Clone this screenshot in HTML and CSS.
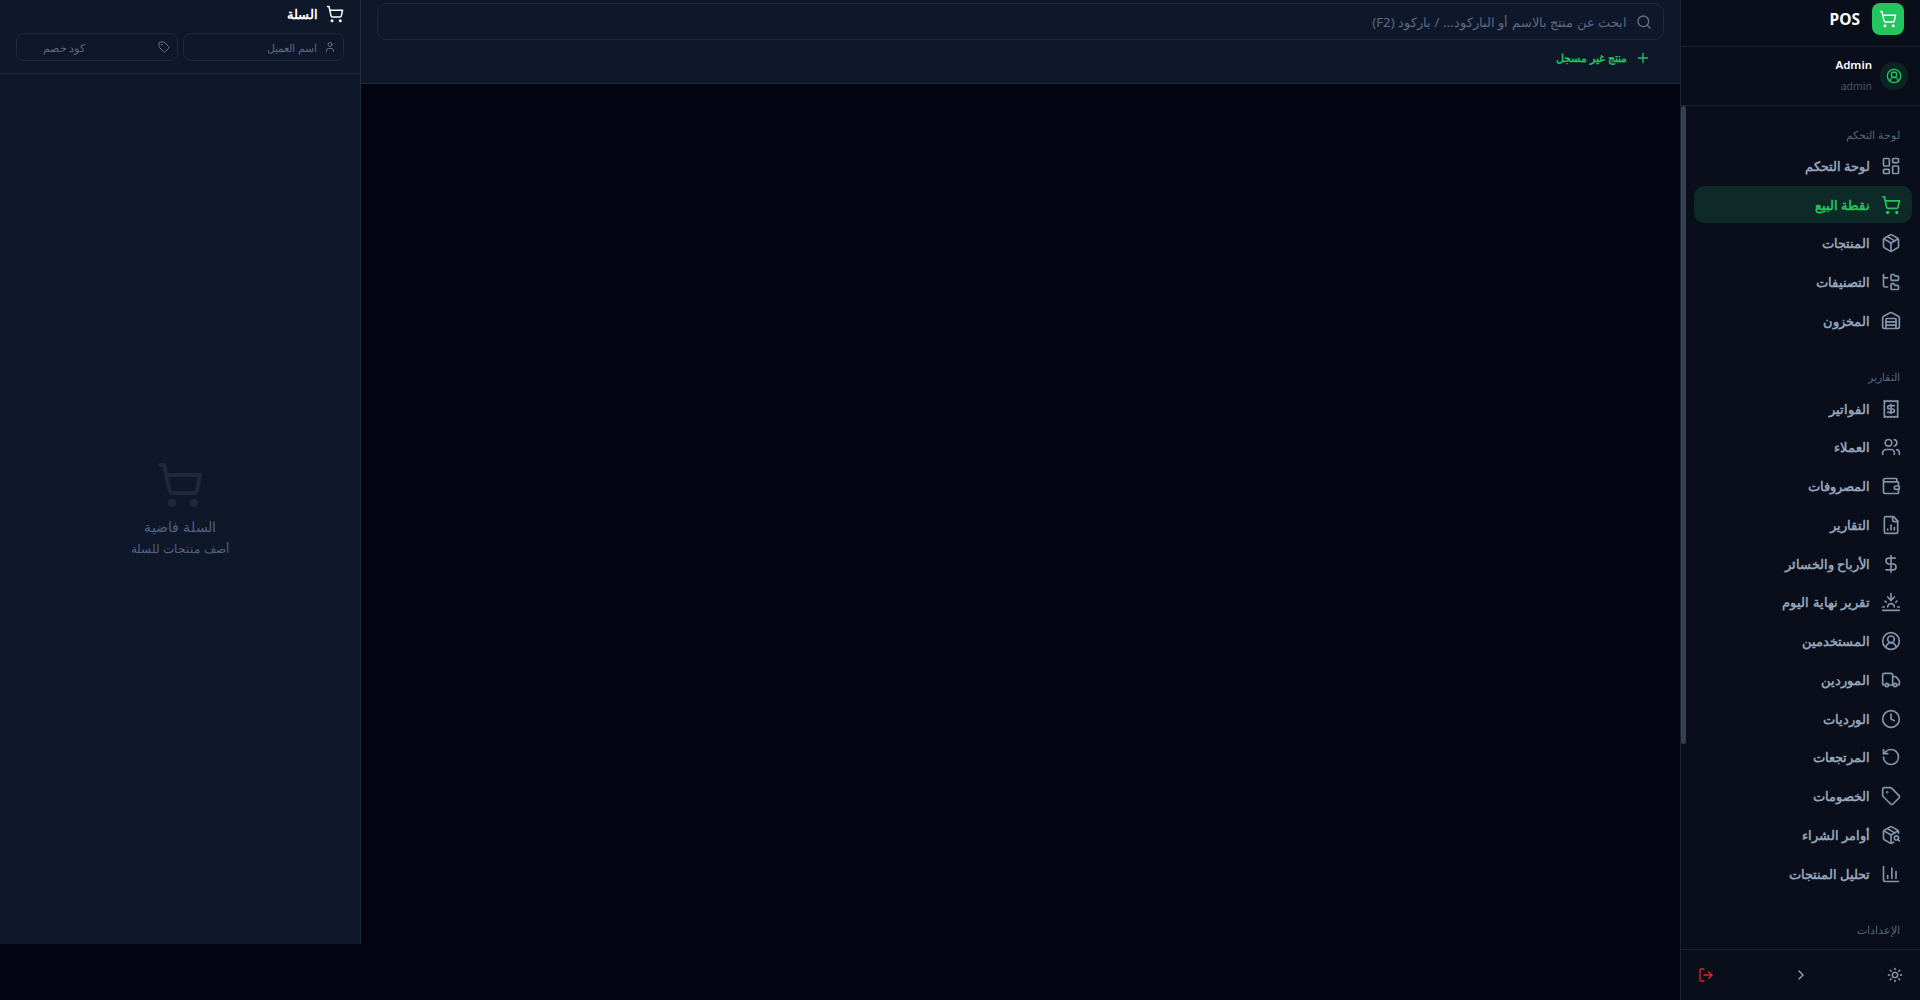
FILE: index.html
```html
<!DOCTYPE html>
<html lang="ar" dir="rtl">
<head>
<meta charset="utf-8">
<title>POS</title>
<link rel="stylesheet" href="styles.css">
</head>
<body>
<svg class="sprite" aria-hidden="true">
  <symbol id="i-cart" viewBox="0 0 24 24"><circle cx="8" cy="21" r="1"/><circle cx="19" cy="21" r="1"/><path d="M2.05 2.05h2l2.66 12.42a2 2 0 0 0 2 1.58h9.78a2 2 0 0 0 1.95-1.57l1.65-7.43H5.12"/></symbol>
  <symbol id="i-dash" viewBox="0 0 24 24"><rect x="3" y="3" width="7" height="9" rx="1"/><rect x="14" y="3" width="7" height="5" rx="1"/><rect x="14" y="12" width="7" height="9" rx="1"/><rect x="3" y="16" width="7" height="5" rx="1"/></symbol>
  <symbol id="i-package" viewBox="0 0 24 24"><path d="m7.5 4.27 9 5.15"/><path d="M21 8a2 2 0 0 0-1-1.73l-7-4a2 2 0 0 0-2 0l-7 4A2 2 0 0 0 3 8v8a2 2 0 0 0 1 1.73l7 4a2 2 0 0 0 2 0l7-4A2 2 0 0 0 21 16Z"/><path d="m3.3 7 8.7 5 8.7-5"/><path d="M12 22V12"/></symbol>
  <symbol id="i-tree" viewBox="0 0 24 24"><path d="M20 10a1 1 0 0 0 1-1V6a1 1 0 0 0-1-1h-2.5a1 1 0 0 1-.8-.4l-.9-1.2A1 1 0 0 0 15 3h-2a1 1 0 0 0-1 1v5a1 1 0 0 0 1 1Z"/><path d="M20 21a1 1 0 0 0 1-1v-3a1 1 0 0 0-1-1h-2.9a1 1 0 0 1-.88-.55l-.42-.85a1 1 0 0 0-.92-.6H13a1 1 0 0 0-1 1v5a1 1 0 0 0 1 1Z"/><path d="M3 5a2 2 0 0 0 2 2h3"/><path d="M3 3v13a2 2 0 0 0 2 2h3"/></symbol>
  <symbol id="i-warehouse" viewBox="0 0 24 24"><path d="M18 21V10a1 1 0 0 0-1-1H7a1 1 0 0 0-1 1v11"/><path d="M22 19a2 2 0 0 1-2 2H4a2 2 0 0 1-2-2V8a2 2 0 0 1 1.132-1.803l7.95-3.974a2 2 0 0 1 1.837 0l7.949 3.974A2 2 0 0 1 22 8z"/><path d="M6 13h12"/><path d="M6 17h12"/></symbol>
  <symbol id="i-receipt" viewBox="0 0 24 24"><path d="M4 2v20l2-1 2 1 2-1 2 1 2-1 2 1 2-1 2 1V2l-2 1-2-1-2 1-2-1-2 1-2-1-2 1Z"/><path d="M16 8h-6a2 2 0 1 0 0 4h4a2 2 0 1 1 0 4H8"/><path d="M12 17.5v-11"/></symbol>
  <symbol id="i-users" viewBox="0 0 24 24"><path d="M16 21v-2a4 4 0 0 0-4-4H6a4 4 0 0 0-4 4v2"/><circle cx="9" cy="7" r="4"/><path d="M22 21v-2a4 4 0 0 0-3-3.87"/><path d="M16 3.13a4 4 0 0 1 0 7.75"/></symbol>
  <symbol id="i-wallet" viewBox="0 0 24 24"><path d="M19 7V4a1 1 0 0 0-1-1H5a2 2 0 0 0 0 4h15a1 1 0 0 1 1 1v4h-3a2 2 0 0 0 0 4h3a1 1 0 0 0 1-1v-2a1 1 0 0 0-1-1"/><path d="M3 5v14a2 2 0 0 0 2 2h15a1 1 0 0 0 1-1v-4"/></symbol>
  <symbol id="i-file" viewBox="0 0 24 24"><path d="M15 2H6a2 2 0 0 0-2 2v16a2 2 0 0 0 2 2h12a2 2 0 0 0 2-2V7Z"/><path d="M14 2v4a2 2 0 0 0 2 2h4"/><path d="M8 18v-1"/><path d="M12 18v-6"/><path d="M16 18v-3"/></symbol>
  <symbol id="i-dollar" viewBox="0 0 24 24"><path d="M12 2v20"/><path d="M17 5H9.5a3.5 3.5 0 0 0 0 7h5a3.5 3.5 0 0 1 0 7H6"/></symbol>
  <symbol id="i-sunset" viewBox="0 0 24 24"><path d="M12 10V2"/><path d="m4.93 10.93 1.41 1.41"/><path d="M2 18h2"/><path d="M20 18h2"/><path d="m19.07 10.93-1.41 1.41"/><path d="M22 22H2"/><path d="m16 6-4 4-4-4"/><path d="M16 18a4 4 0 0 0-8 0"/></symbol>
  <symbol id="i-usercircle" viewBox="0 0 24 24"><path d="M18 20a6 6 0 0 0-12 0"/><circle cx="12" cy="10" r="4"/><circle cx="12" cy="12" r="10"/></symbol>
  <symbol id="i-truck" viewBox="0 0 24 24"><path d="M14 18V6a2 2 0 0 0-2-2H4a2 2 0 0 0-2 2v11a1 1 0 0 0 1 1h2"/><path d="M15 18H9"/><path d="M19 18h2a1 1 0 0 0 1-1v-3.65a1 1 0 0 0-.22-.624l-3.48-4.35A1 1 0 0 0 17.52 8H14"/><circle cx="17" cy="18" r="2"/><circle cx="7" cy="18" r="2"/></symbol>
  <symbol id="i-clock" viewBox="0 0 24 24"><circle cx="12" cy="12" r="10"/><path d="M12 6v6l4 2"/></symbol>
  <symbol id="i-undo" viewBox="0 0 24 24"><path d="M3 12a9 9 0 1 0 9-9 9.75 9.75 0 0 0-6.74 2.74L3 8"/><path d="M3 3v5h5"/></symbol>
  <symbol id="i-tag" viewBox="0 0 24 24"><path d="M12.586 2.586A2 2 0 0 0 11.172 2H4a2 2 0 0 0-2 2v7.172a2 2 0 0 0 .586 1.414l8.704 8.704a2.426 2.426 0 0 0 3.42 0l6.58-6.58a2.426 2.426 0 0 0 0-3.42z"/><circle cx="7.5" cy="7.5" r=".5"/></symbol>
  <symbol id="i-pksearch" viewBox="0 0 24 24"><path d="M21 10V8a2 2 0 0 0-1-1.73l-7-4a2 2 0 0 0-2 0l-7 4A2 2 0 0 0 3 8v8a2 2 0 0 0 1 1.73l7 4a2 2 0 0 0 2 0l2-1.14"/><path d="m7.5 4.27 9 5.15"/><path d="M3.29 7 12 12l8.71-5"/><path d="M12 22V12"/><circle cx="18.5" cy="15.5" r="2.5"/><path d="M20.27 17.27 22 19"/></symbol>
  <symbol id="i-chart" viewBox="0 0 24 24"><path d="M3 3v16a2 2 0 0 0 2 2h16"/><path d="M18 17V9"/><path d="M13 17V5"/><path d="M8 17v-3"/></symbol>
  <symbol id="i-logout" viewBox="0 0 24 24"><path d="M9 21H5a2 2 0 0 1-2-2V5a2 2 0 0 1 2-2h4"/><path d="m16 17 5-5-5-5"/><path d="M21 12H9"/></symbol>
  <symbol id="i-chevron" viewBox="0 0 24 24"><path d="m9 18 6-6-6-6"/></symbol>
  <symbol id="i-sun" viewBox="0 0 24 24"><circle cx="12" cy="12" r="4"/><path d="M12 2v2"/><path d="M12 20v2"/><path d="m4.93 4.93 1.41 1.41"/><path d="m17.66 17.66 1.41 1.41"/><path d="M2 12h2"/><path d="M20 12h2"/><path d="m6.34 17.66-1.41 1.41"/><path d="m19.07 4.93-1.41 1.41"/></symbol>
  <symbol id="i-search" viewBox="0 0 24 24"><path d="m21 21-4.34-4.34"/><circle cx="11" cy="11" r="8"/></symbol>
  <symbol id="i-plus" viewBox="0 0 24 24"><path d="M5 12h14"/><path d="M12 5v14"/></symbol>
  <symbol id="i-user" viewBox="0 0 24 24"><path d="M19 21v-2a4 4 0 0 0-4-4H9a4 4 0 0 0-4 4v2"/><circle cx="12" cy="7" r="4"/></symbol>
</svg>

<div class="app">
  <aside class="sidebar">
    <div class="brand">
      <div class="brand-logo"><svg class="icon icon-18"><use href="#i-cart"/></svg></div>
      <span class="brand-name">POS</span>
    </div>
    <div class="user">
      <div class="avatar"><svg class="icon icon-16"><use href="#i-usercircle"/></svg></div>
      <div class="user-info">
        <div class="user-name">Admin</div>
        <div class="user-role">admin</div>
      </div>
    </div>
    <div class="nav-wrap">
      <nav class="nav">
        <div class="nav-group">
          <div class="nav-label">لوحة التحكم</div>
          <a class="nav-item"><svg class="icon icon-20"><use href="#i-dash"/></svg><span>لوحة التحكم</span></a>
          <a class="nav-item active"><svg class="icon icon-20"><use href="#i-cart"/></svg><span>نقطة البيع</span></a>
          <a class="nav-item"><svg class="icon icon-20"><use href="#i-package"/></svg><span>المنتجات</span></a>
          <a class="nav-item"><svg class="icon icon-20"><use href="#i-tree"/></svg><span>التصنيفات</span></a>
          <a class="nav-item"><svg class="icon icon-20"><use href="#i-warehouse"/></svg><span>المخزون</span></a>
        </div>
        <div class="nav-group">
          <div class="nav-label">التقارير</div>
          <a class="nav-item"><svg class="icon icon-20"><use href="#i-receipt"/></svg><span>الفواتير</span></a>
          <a class="nav-item"><svg class="icon icon-20"><use href="#i-users"/></svg><span>العملاء</span></a>
          <a class="nav-item"><svg class="icon icon-20"><use href="#i-wallet"/></svg><span>المصروفات</span></a>
          <a class="nav-item"><svg class="icon icon-20"><use href="#i-file"/></svg><span>التقارير</span></a>
          <a class="nav-item"><svg class="icon icon-20"><use href="#i-dollar"/></svg><span>الأرباح والخسائر</span></a>
          <a class="nav-item"><svg class="icon icon-20"><use href="#i-sunset"/></svg><span>تقرير نهاية اليوم</span></a>
          <a class="nav-item"><svg class="icon icon-20"><use href="#i-usercircle"/></svg><span>المستخدمين</span></a>
          <a class="nav-item"><svg class="icon icon-20"><use href="#i-truck"/></svg><span>الموردين</span></a>
          <a class="nav-item"><svg class="icon icon-20"><use href="#i-clock"/></svg><span>الورديات</span></a>
          <a class="nav-item"><svg class="icon icon-20"><use href="#i-undo"/></svg><span>المرتجعات</span></a>
          <a class="nav-item"><svg class="icon icon-20"><use href="#i-tag"/></svg><span>الخصومات</span></a>
          <a class="nav-item"><svg class="icon icon-20"><use href="#i-pksearch"/></svg><span>أوامر الشراء</span></a>
          <a class="nav-item"><svg class="icon icon-20"><use href="#i-chart"/></svg><span>تحليل المنتجات</span></a>
        </div>
        <div class="nav-group">
          <div class="nav-label">الإعدادات</div>
        </div>
      </nav>
      <div class="nav-thumb"></div>
    </div>
    <div class="sidebar-foot">
      <svg class="icon icon-16 foot-sun"><use href="#i-sun"/></svg>
      <svg class="icon icon-16 foot-chev"><use href="#i-chevron"/></svg>
      <svg class="icon icon-16 foot-out"><use href="#i-logout"/></svg>
    </div>
  </aside>

  <div class="page">
    <main class="workspace">
      <div class="topbar">
        <div class="search">
          <svg class="icon icon-16"><use href="#i-search"/></svg>
          <span>ابحث عن منتج بالاسم أو الباركود... / باركود (F2)</span>
        </div>
        <div class="add-row">
          <svg class="icon icon-16"><use href="#i-plus"/></svg>
          <span>منتج غير مسجل</span>
        </div>
      </div>
    </main>
    <section class="cart">
      <div class="cart-head">
        <div class="cart-title"><svg class="icon icon-18"><use href="#i-cart"/></svg><span>السلة</span></div>
        <div class="cart-fields">
          <div class="field"><svg class="icon icon-12"><use href="#i-user"/></svg><span>اسم العميل</span></div>
          <div class="field field-code"><svg class="icon icon-12"><use href="#i-tag"/></svg><span>كود خصم</span></div>
        </div>
      </div>
      <div class="cart-empty">
        <svg class="icon icon-48"><use href="#i-cart"/></svg>
        <p class="empty-title">السلة فاضية</p>
        <p class="empty-sub">أضف منتجات للسلة</p>
      </div>
    </section>
  </div>
</div>
</body>
</html>
```
FILE: styles.css
```css
* { box-sizing: border-box; margin: 0; padding: 0; }
html, body { height: 100%; }
body {
  background: #020412;
  color: #94a3b8;
  font-family: "Noto Sans", sans-serif;
  overflow: hidden;
}
.sprite { display: none; }
.icon {
  fill: none;
  stroke: currentColor;
  stroke-width: 2;
  stroke-linecap: round;
  stroke-linejoin: round;
  flex: none;
  display: block;
}
.icon-12 { width: 12px; height: 12px; }
.icon-16 { width: 16px; height: 16px; }
.icon-18 { width: 18px; height: 18px; }
.icon-20 { width: 20px; height: 20px; }
.icon-48 { width: 48px; height: 48px; }

.app { display: flex; height: 1000px; }

/* Sidebar */
.sidebar {
  width: 240px;
  flex: none;
  height: 100%;
  display: flex;
  flex-direction: column;
  background: #090e1a;
  border-left: 1px solid #1a2230;
}
.brand {
  height: 47px;
  flex: none;
  display: flex;
  align-items: flex-start;
  gap: 12px;
  padding: 3px 16px 0;
  border-bottom: 1px solid #1a2230;
}
.brand-logo {
  width: 32px;
  height: 32px;
  border-radius: 8px;
  background: #22c55e;
  color: #fff;
  display: flex;
  align-items: center;
  justify-content: center;
}
.brand-name {
  color: #fff;
  font-size: 15.5px;
  font-weight: 700;
  line-height: 32px;
}
.user {
  height: 59px;
  flex: none;
  display: flex;
  align-items: center;
  gap: 8px;
  padding: 0 12px;
  border-bottom: 1px solid #1a2230;
}
.avatar {
  width: 28px;
  height: 28px;
  border-radius: 50%;
  background: rgba(34, 197, 94, 0.12);
  color: #22c55e;
  display: flex;
  align-items: center;
  justify-content: center;
}
.user-name { color: #fff; font-size: 11.5px; font-weight: 600; line-height: 18px; margin-top: -2px; }
.user-role { color: #475569; font-size: 10.5px; line-height: 18px; margin-top: 3px; }

.nav-wrap { position: relative; flex: 1; min-height: 0; }
.nav {
  height: 100%;
  overflow: hidden;
  padding: 20.5px 8px 0 13px;
}
.nav-thumb {
  position: absolute;
  top: 0;
  left: 0;
  width: 5px;
  height: 638px;
  border-radius: 3px;
  background: #334155;
}
.nav-group { display: flex; flex-direction: column; gap: 2px; margin-bottom: 30px; }
.nav-label {
  color: #55647b;
  font-size: 11px;
  line-height: 16px;
  padding: 0 12px;
  margin-bottom: 3px;
}
.nav-item {
  height: 36.75px;
  display: flex;
  align-items: center;
  gap: 11px;
  padding: 0 11px;
  border-radius: 10px;
  color: #94a3b8;
  font-size: 12.9px;
  font-weight: 600;
}
.nav-item.active { background: #0e2a28; color: #22c55e; }
.nav-item .icon { color: #8494ab; }
.nav-item.active .icon { color: #22c55e; }

.sidebar-foot {
  height: 51px;
  flex: none;
  display: flex;
  align-items: center;
  justify-content: space-between;
  padding: 0 17px;
  border-top: 1px solid #1a2230;
}
.foot-sun { color: #94a3b8; }
.foot-chev { color: #94a3b8; }
.foot-out { color: #dc2626; }

/* Page */
.page { flex: 1; min-width: 0; height: 944px; display: flex; }
.workspace { flex: 1; min-width: 0; display: flex; flex-direction: column; }
.topbar {
  height: 84px;
  background: #0f172a;
  border-bottom: 1px solid #1e293b;
  padding: 3px 16px 0;
}
.search {
  height: 37px;
  display: flex;
  align-items: center;
  gap: 9px;
  padding: 0 11px;
  border: 1px solid #1e293b;
  border-radius: 10px;
  color: #5a6a82;
  font-size: 13.3px;
}
.search .icon { color: #64748b; }
.add-row {
  display: flex;
  align-items: center;
  gap: 8px;
  margin-top: 8px;
  padding: 0 13px;
  color: #22c55e;
  font-size: 10.7px;
  font-weight: 700;
  height: 20px;
}

/* Cart */
.cart {
  width: 361px;
  flex: none;
  display: flex;
  flex-direction: column;
  background: #0f172a;
  border-inline-start: 1px solid #1e293b;
}
.cart-head {
  height: 74px;
  flex: none;
  padding: 5px 16px 0;
  border-bottom: 1px solid #1e293b;
}
.cart-title {
  display: flex;
  align-items: center;
  gap: 8px;
  height: 18px;
  color: #fff;
  font-size: 13.2px;
  font-weight: 700;
}
.cart-fields { display: grid; grid-template-columns: 1fr 1fr; gap: 5px; margin-top: 10px; }
.field {
  height: 28px;
  display: flex;
  align-items: center;
  gap: 7px;
  padding: 0 7px;
  border: 1px solid #1e293b;
  border-radius: 8px;
  color: #5a6a82;
  font-size: 11.4px;
}
.field .icon { color: #64748b; }
.field-code { gap: 72px; }
.cart-empty {
  flex: 1;
  display: flex;
  flex-direction: column;
  align-items: center;
  padding-top: 387px;
}
.cart-empty .icon { color: #1e293b; }
.empty-title { color: #526280; font-size: 14px; line-height: 20px; margin-top: 8px; }
.empty-sub { color: #526280; font-size: 12px; line-height: 18px; margin-top: 3px; }
```
